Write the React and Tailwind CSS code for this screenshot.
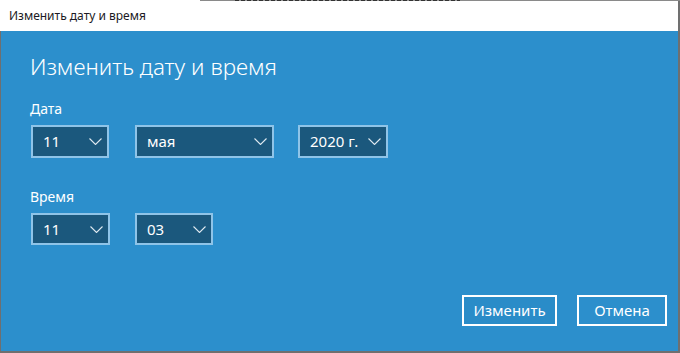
import React from 'react';

function Chevron() {
  return (
    <svg width="13" height="7" viewBox="0 0 13 7" fill="none" className="shrink-0">
      <path d="M0.5 0.5 L6.5 6.5 L12.5 0.5" stroke="#dfe9f0" strokeWidth="1.1" />
    </svg>
  );
}

function Select({ value, width, height = 'h-[33px]' }) {
  return (
    <div
      className={`${width} ${height} flex items-center justify-between border-2 border-[#8fc4e8] bg-[#1b587d] pl-[10px] pr-[5px] text-[15px] text-white`}
    >
      <span>{value}</span>
      <Chevron />
    </div>
  );
}

export default function App() {
  return (
    <div className="flex h-[353px] w-[680px] flex-col bg-white font-['Noto_Sans',sans-serif]">
      {/* strip of the window behind */}
      <div className="flex h-px shrink-0">
        <div className="w-[200px] bg-white" />
        <div className="w-[35px] bg-[#8a8a8a]" />
        <div className="w-[225px] bg-[repeating-linear-gradient(90deg,#333_0,#333_4px,#999_4px,#999_6px)]" />
        <div className="flex-1 bg-[#8a8a8a]" />
      </div>

      {/* title bar */}
      <div className="flex h-[30px] shrink-0 items-center border-r-2 border-[#707070] pl-[9px] text-[12px] text-[#1b1a24]">
        Изменить дату и время
      </div>

      {/* body */}
      <div className="flex flex-1 flex-col border-b-2 border-l border-r-2 border-[#6f6f6f] bg-[#2c8fcc] pl-[29px] text-white">
        <h1 className="mt-[20px] text-[22.4px] font-light leading-[31px]">Изменить дату и время</h1>

        <div className="mt-[17px] text-[14px] leading-[20px]">Дата</div>
        <div className="mt-[6px] flex items-center">
          <div className="ml-px">
            <Select value="11" width="w-[78px]" />
          </div>
          <div className="ml-[26px]">
            <Select value="мая" width="w-[139px]" />
          </div>
          <div className="ml-[24px]">
            <Select value="2020 г." width="w-[90px]" />
          </div>
        </div>

        <div className="mt-[29px] text-[14px] leading-[20px]">Время</div>
        <div className="mt-[6px] flex items-center">
          <div className="ml-px">
            <Select value="11" width="w-[79px]" height="h-[32px]" />
          </div>
          <div className="ml-[25px]">
            <Select value="03" width="w-[78px]" height="h-[32px]" />
          </div>
        </div>

        <div className="mt-[50px] flex justify-end gap-[20px] pr-[11px]">
          <button className="h-[31px] w-[95px] border-2 border-white bg-[#2a8cc8] text-[15px] text-white">
            Изменить
          </button>
          <button className="h-[31px] w-[90px] border-2 border-white text-[15px] text-white">
            Отмена
          </button>
        </div>
      </div>
    </div>
  );
}
